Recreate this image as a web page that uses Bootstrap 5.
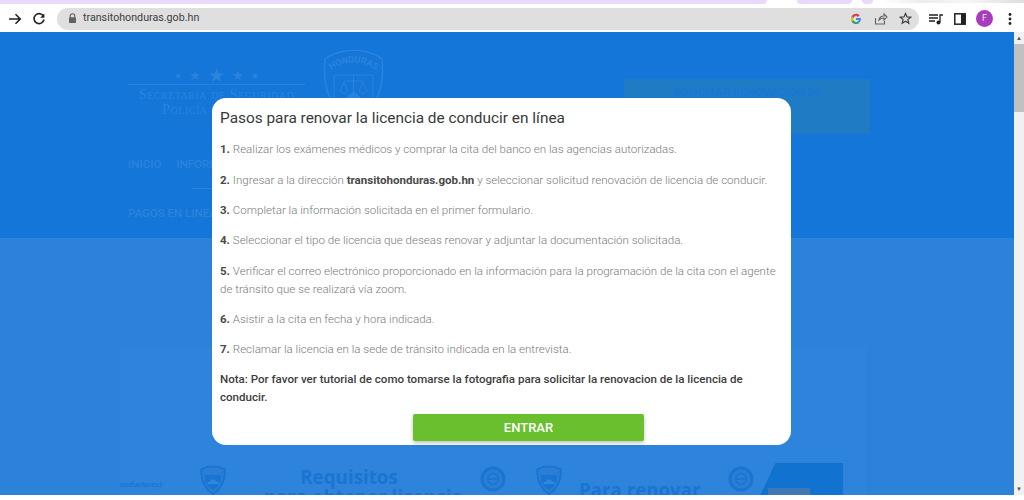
<!DOCTYPE html>
<html lang="es">
<head>
  <meta charset="UTF-8" />
  <title>Pasos para renovar la licencia</title>
  <meta name="viewport" content="width=device-width, initial-scale=1" />
  <link href="https://cdn.jsdelivr.net/npm/bootstrap@5.3.2/dist/css/bootstrap.min.css" rel="stylesheet" />
  <style>
    html, body { height: 500px; overflow: hidden; }
    body { font-family: Roboto, "Liberation Sans", sans-serif; background: #fff; position: relative; }

    /* barra del navegador */
    .tab-strip { height: 5px; background: #fff; }
    .tab-purple { background: #e9d9fa; border-radius: 0 0 6px 6px; height: 4px; }
    .tab-main { width: 767px; border-radius: 0 0 6px 0; }
    .tab-second { width: 55px; margin-left: 30px; }
    .tab-third { width: 11px; margin-left: 10px; }
    .tab-fade { height: 3px; margin-left: 8px; background: linear-gradient(90deg, #fff, #ececec 30%, #f6f6f6 60%, #dedede); }
    .browser-bar { height: 27px; background: #fff; padding-left: 8px; }
    .nav-icon { flex: 0 0 auto; display: block; }
    .reload-icon { margin-left: 10px; }
    .url-pill { width: 862px; height: 22px; margin-left: 11px; padding: 0 7px 0 11px; background: #dfdfdf; border-radius: 11px; }
    .url-text { font-size: 10.7px; color: #3c4043; margin-left: 6px; }
    .g-icon { margin-left: auto; }
    .share-icon { margin-left: 12px; }
    .star-icon { margin-left: 11px; }
    .media-icon { margin-left: 10px; }
    .side-icon { margin-left: 11px; }
    .avatar-f { width: 17px; height: 17px; margin-left: 10px; border-radius: 50%; background: #a93cbd; color: #eed; font-size: 9px; line-height: 17px; text-align: center; }
    .kebab-icon { margin-left: 15px; }

    /* pagina de fondo, atenuada */
    .page-view { height: 463px; }
    .page-main { width: 1014px; overflow: hidden; background: #2b82d8; }
    .site-head { height: 206px; background: #1476d8; padding: 18px 0 0 128px; color: #2b83dd; }
    .logo-text { width: 177px; flex: 0 0 auto; font-family: "Liberation Serif", serif; font-variant: small-caps; font-size: 14.4px; line-height: 15px; text-align: center; white-space: nowrap; padding-top: 17px; letter-spacing: .5px; }
    .logo-stars { font-variant: normal; height: 18px; line-height: 16px; letter-spacing: 0; border-bottom: 1px solid #2b83dd; margin-bottom: 2px; gap: 7px; }
    .star-s { font-size: 9px; }
    .star-m { font-size: 13px; }
    .star-l { font-size: 19px; }
    .shield-box { margin-left: 17px; flex: 0 0 auto; }
    .renew-box { width: 246px; height: 55px; margin-left: 239px; margin-top: 29px; background: #1f7cc4; color: #1a76d6; font-size: 11.5px; font-weight: 700; text-align: center; padding-top: 6px; line-height: 15px; }
    .menu-row { font-size: 11.5px; font-weight: 500; margin-top: 22px; gap: 15px; }
    .menu-on { width: 80px; white-space: nowrap; }
    .menu-on::after { content: ""; display: block; width: 60px; height: 1px; margin: 15px 0 0 16px; background: #2b83dd; }
    .menu-two { font-size: 11.5px; font-weight: 500; margin-top: 16px; }
    .page-band { padding: 109px 148px 0 120px; }
    .info-panel { height: 148px; background: #2d84da; padding: 118px 0 0 0; overflow: hidden; }
    .req-title { color: #1a75d2; font-family: "Open Sans", sans-serif; font-weight: 700; font-size: 18.8px; line-height: 20px; text-align: center; white-space: nowrap; width: 170px; margin-left: 38px; margin-top: 2px; flex: 0 0 auto; }
    .req-two { color: #1a75d2; font-family: "Open Sans", sans-serif; font-weight: 700; font-size: 18.7px; line-height: 24px; margin-left: 17px; margin-top: 13px; white-space: nowrap; }
    .small-seal { flex: 0 0 auto; }
    .seal-a { margin-left: 12px; }
    .seal-b { margin-left: 46px; }
    .seal-c { margin-left: 30px; }
    .seal-d { margin-left: 28px; }
    .lead-note { font-size: 8px; font-style: italic; font-weight: 700; color: #1a75d2; width: 68px; margin-top: 14px; text-indent: -4px; overflow: hidden; white-space: nowrap; flex: 0 0 auto; line-height: 12px; height: 12px; }
    .blue-wedge { width: 83px; height: 32px; margin-left: 6px; margin-top: -2px; background: linear-gradient(#3f78b5, #3f78b5) no-repeat 8px 25px / 42px 7px, #1272cf; clip-path: polygon(18% 0, 100% 0, 100% 100%, 0 100%); }
    .scroll-rail { width: 10px; background: #f1f1f1; }
    .scroll-up, .scroll-down { height: 12px; color: #555; font-size: 6px; line-height: 12px; text-align: center; }
    .scroll-thumb { height: 68px; background: #c1c1c1; }

    /* modal */
    .steps-modal { position: absolute; left: 212px; top: 98px; width: 579px; height: 347px; background: #fff; border-radius: 14px; padding: 10px 8px 0 8px; }
    .steps-title { font-size: 15.4px; font-weight: 400; line-height: 20px; color: #37393b; margin: 0 0 12px 0; }
    .step-line { font-size: 11.55px; line-height: 18px; color: #7a7a7a; font-weight: 300; margin: 0 0 12.2px 0; }
    .step-line:first-of-type { margin-bottom: 13px; }
    .step-line b { font-weight: 700; color: #4a4a4a; }
    .step-note { font-size: 11.55px; line-height: 18px; color: #3d3d3d; font-weight: 500; margin: 0; }
    .btn-enter { display: block; width: 231px; height: 27px; margin: 8px 0 0 193px; padding: 0; background: #6abf2c; border: 0; border-radius: 2px; color: #fff; font-size: 13px; font-weight: 500; line-height: 27px; box-shadow: 0 2px 4px rgba(0,0,0,.25); }
    .btn-enter:hover { background: #6abf2c; color: #fff; }
  </style>
</head>
<body>

<div class="tab-strip d-flex">
  <div class="tab-purple tab-main"></div>
  <div class="tab-purple tab-second"></div>
  <div class="tab-purple tab-third"></div>
  <div class="tab-fade flex-grow-1"></div>
</div>

<div class="browser-bar d-flex align-items-center">
  <svg class="nav-icon" width="14" height="14" viewBox="0 0 14 14"><path d="M1 7h11M7.5 2.2 12.3 7l-4.800 4.800" fill="none" stroke="#202124" stroke-width="1.600"/></svg>
  <svg class="nav-icon reload-icon" width="14" height="14" viewBox="0 0 14 14"><path d="M11.600 4.500A5 5 0 1 0 12 7.500" fill="none" stroke="#202124" stroke-width="1.600"/><path d="M12.400 1.500v4.200H8.200z" fill="#202124"/></svg>
  <div class="url-pill d-flex align-items-center">
    <svg class="nav-icon" width="9" height="11" viewBox="0 0 9 11"><path d="M2.200 4.500V3a2.300 2.300 0 0 1 4.600 0v1.500" fill="none" stroke="#5f6368" stroke-width="1.100"/><rect x="1" y="4.300" width="7" height="5.700" rx=".8" fill="#5f6368"/></svg>
    <span class="url-text">transitohonduras.gob.hn</span>
    <svg class="nav-icon g-icon" width="12" height="12" viewBox="0 0 12 12">
      <path d="M10.900 5H6v2h2.900A3 3 0 1 1 8 3.800l1.500-1.500A5 5 0 1 0 11 6a5 5 0 0 0-.1-1z" fill="#4285f4"/>
      <path d="M1.600 3.500 3.300 4.800A3 3 0 0 1 8 3.800l1.500-1.500A5 5 0 0 0 1.600 3.500z" fill="#ea4335"/>
      <path d="M1 6a5 5 0 0 0 .6 2.500l1.700-1.300a3 3 0 0 1 0-2.400L1.600 3.500A5 5 0 0 0 1 6z" fill="#fbbc05"/>
      <path d="M1.600 8.500A5 5 0 0 0 9.300 9.800L7.700 8.500a3 3 0 0 1-4.400-1.300z" fill="#34a853"/>
    </svg>
    <svg class="nav-icon share-icon" width="14" height="13" viewBox="0 0 14 13"><path d="M1.500 6v6h9V9M5 8c.4-2.500 2.300-4 5-4V1.800l3 3.200-3 3.200V6C8 6 6.300 6.700 5 8z" fill="none" stroke="#5f6368" stroke-width="1.100"/></svg>
    <svg class="nav-icon star-icon" width="13" height="13" viewBox="0 0 13 13"><path d="m6.500 1.500 1.500 3.400 3.700.3-2.800 2.400.9 3.600-3.300-1.900-3.300 1.900.9-3.600L1.300 5.200l3.700-.3z" fill="none" stroke="#3c4043" stroke-width="1.200"/></svg>
  </div>
  <svg class="nav-icon media-icon" width="14" height="12" viewBox="0 0 14 12"><path d="M0 2h9M0 5h9M0 8h6" stroke="#202124" stroke-width="1.300"/><path d="M11 9V2h3" fill="none" stroke="#202124" stroke-width="1.300"/><circle cx="9.500" cy="9.500" r="2" fill="#202124"/></svg>
  <svg class="nav-icon side-icon" width="12" height="12" viewBox="0 0 12 12"><rect x=".8" y=".8" width="10.400" height="10.400" fill="none" stroke="#202124" stroke-width="1.500"/><rect x="7" y="1" width="4" height="10" fill="#202124"/></svg>
  <div class="avatar-f">F</div>
  <svg class="nav-icon kebab-icon" width="4" height="12" viewBox="0 0 4 12"><circle cx="2" cy="1.500" r="1.400" fill="#202124"/><circle cx="2" cy="6" r="1.400" fill="#202124"/><circle cx="2" cy="10.500" r="1.400" fill="#202124"/></svg>
</div>

<div class="page-view d-flex">
  <div class="page-main">
    <div class="site-head">
      <div class="d-flex">
        <div class="logo-text">
          <div class="logo-stars d-flex justify-content-center align-items-center">
            <span class="star-s">★</span><span class="star-m">★</span><span class="star-l">★</span><span class="star-m">★</span><span class="star-s">★</span>
          </div>
          Secretaría de Seguridad<br>Policía Nacional
        </div>
        <svg class="shield-box" width="63" height="72" viewBox="0 0 63 72">
          <path d="M3 9C9 4 18 1 31.500 0 45 1 54 4 60 9c2 22 0 46-28.500 62C3 55 1 31 3 9z" fill="none" stroke="#2b83dd" stroke-width="1.500"/>
          <path id="shieldArc" d="M6 22Q31.500 3 57 22" fill="none"/>
          <text font-size="9" font-weight="700" fill="#2b83dd"><textPath href="#shieldArc" startOffset="50%" text-anchor="middle">HONDURAS</textPath></text>
          <path d="M12 25h39v23L31.500 62 12 48z" fill="none" stroke="#2b83dd" stroke-width="1"/>
          <path d="M31.500 26v18M22 31h19M18 41c1 3 7 3 8 0l-4-9zM37 41c1 3 7 3 8 0l-4-9z" fill="none" stroke="#2b83dd" stroke-width="1"/>
          <path d="M24 48 31.500 41 39 48z" fill="#2b83dd"/>
        </svg>
        <div class="renew-box">SOLICITAR RENOVACIÓN DE<br>LICENCIA</div>
      </div>
      <div class="menu-row d-flex">
        <span>INICIO</span>
        <span class="menu-on">INFORMACIÓN</span>
      </div>
      <div class="menu-two">PAGOS EN LINEA</div>
    </div>
    <div class="page-band">
      <div class="info-panel d-flex">
        <div class="lead-note">conductores)</div>
        <svg class="small-seal seal-a" width="26" height="30" viewBox="0 0 26 30"><path d="M1.500 4c7-3 16-3 23 0 1 11-2 19-11.500 25C3.500 23 .5 15 1.500 4z" fill="#2a7fd4" stroke="#1a75d2" stroke-width="2"/><path d="M5 10h16v7c-2 4-5 6-8 8-3-2-6-4-8-8z" fill="#1a75d2"/><path d="M6 19l7-5 7 5z" fill="#2f88dc"/></svg>
        <div class="req-title">Requisitos<br>para obtener licencia</div>
        <svg class="small-seal seal-b" width="26" height="30" viewBox="0 0 26 30"><circle cx="13" cy="14" r="11" fill="#2a7fd4" stroke="#1a75d2" stroke-width="3"/><circle cx="13" cy="14" r="5.500" fill="none" stroke="#1a75d2" stroke-width="1.500"/><path d="M8 14h10" stroke="#1a75d2" stroke-width="1.500"/></svg>
        <svg class="small-seal seal-c" width="26" height="30" viewBox="0 0 26 30"><path d="M1.500 4c7-3 16-3 23 0 1 11-2 19-11.500 25C3.500 23 .5 15 1.500 4z" fill="#2a7fd4" stroke="#1a75d2" stroke-width="2"/><path d="M5 10h16v7c-2 4-5 6-8 8-3-2-6-4-8-8z" fill="#1a75d2"/><path d="M6 19l7-5 7 5z" fill="#2f88dc"/></svg>
        <div class="req-two">Para renovar</div>
        <svg class="small-seal seal-d" width="26" height="30" viewBox="0 0 26 30"><circle cx="13" cy="14" r="11" fill="#2a7fd4" stroke="#1a75d2" stroke-width="3"/><circle cx="13" cy="14" r="5.500" fill="none" stroke="#1a75d2" stroke-width="1.500"/><path d="M8 14h10" stroke="#1a75d2" stroke-width="1.500"/></svg>
        <div class="blue-wedge"></div>
      </div>
    </div>
  </div>
  <div class="scroll-rail d-flex flex-column">
    <div class="scroll-up">▲</div>
    <div class="scroll-thumb"></div>
    <div class="scroll-down mt-auto">▼</div>
  </div>
</div>

<div class="steps-modal">
  <h5 class="steps-title">Pasos para renovar la licencia de conducir en línea</h5>
  <p class="step-line"><b>1.</b> Realizar los exámenes médicos y comprar la cita del banco en las agencias autorizadas.</p>
  <p class="step-line"><b>2.</b> Ingresar a la dirección <b>transitohonduras.gob.hn</b> y seleccionar solicitud renovación de licencia de conducir.</p>
  <p class="step-line"><b>3.</b> Completar la información solicitada en el primer formulario.</p>
  <p class="step-line"><b>4.</b> Seleccionar el tipo de licencia que deseas renovar y adjuntar la documentación solicitada.</p>
  <p class="step-line"><b>5.</b> Verificar el correo electrónico proporcionado en la información para la programación de la cita con el agente de tránsito que se realizará vía zoom.</p>
  <p class="step-line"><b>6.</b> Asistir a la cita en fecha y hora indicada.</p>
  <p class="step-line"><b>7.</b> Reclamar la licencia en la sede de tránsito indicada en la entrevista.</p>
  <p class="step-note">Nota: Por favor ver tutorial de como tomarse la fotografia para solicitar la renovacion de la licencia de conducir.</p>
  <button type="button" class="btn btn-enter">ENTRAR</button>
</div>

<script src="https://cdn.jsdelivr.net/npm/bootstrap@5.3.2/dist/js/bootstrap.bundle.min.js"></script>
</body>
</html>
